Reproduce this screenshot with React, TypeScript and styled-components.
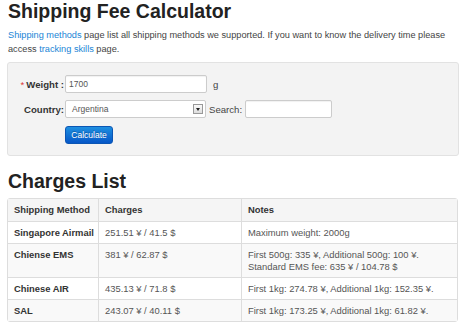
import React from 'react';
import styled, { createGlobalStyle } from 'styled-components';

const GlobalStyle = createGlobalStyle`
  body {
    margin: 0;
    background: #fff;
    font-family: "Liberation Sans", Arial, sans-serif;
    color: #333;
  }
`

const Page = styled.div`
  padding: 0 1px 0 7px;
  width: 460px;
  box-sizing: border-box;
`
const Title = styled.h1`
  margin: 0;
  padding: 0 0 0 1px;
  font-size: 19.5px;
  line-height: 22px;
  font-weight: bold;
  color: #222;
`
const Intro = styled.p`
  margin: 6px 0 0 1px;
  font-size: 9.2px;
  line-height: 14px;
  white-space: nowrap;
  color: #444;
`
const Link = styled.a`
  color: #1a85d6;
  text-decoration: none;
`
const FormPanel = styled.div`
  margin-top: 6px;
  height: 94px;
  box-sizing: border-box;
  background: #f3f3f3;
  border: 1px solid #e2e2e2;
  border-radius: 3px;
  padding: 12px 0 0 0;
  display: grid;
  grid-template-columns: 56px auto;
  align-content: start;
  row-gap: 7px;
  column-gap: 1px;
  align-items: center;
`
const Label = styled.label`
  text-align: right;
  font-size: 9.6px;
  font-weight: bold;
  color: #333;
`
const Required = styled.span`
  color: #d33;
  font-weight: normal;
  margin-right: 2px;
`
const Field = styled.div`
  display: flex;
  align-items: center;
  gap: 3px;
  font-size: 9.6px;
  color: #444;
`
const TextInput = styled.div<{ $w: number }>`
  width: ${p => p.$w}px;
  height: 18px;
  box-sizing: border-box;
  background: #fff;
  border: 1px solid #ccc;
  border-radius: 2px;
  font-size: 8.5px;
  line-height: 16px;
  padding: 0 3px;
  color: #555;
  box-shadow: inset 0 1px 1px rgba(0, 0, 0, 0.06);
`
const Unit = styled.span`
  margin-left: 3px;
  font-size: 9.6px;
`
const Select = styled.div`
  width: 141px;
  height: 18px;
  box-sizing: border-box;
  background: #fff;
  border: 1px solid #ccc;
  border-radius: 2px;
  display: flex;
  align-items: center;
  justify-content: space-between;
  padding: 0 2px 0 6px;
  font-size: 8.5px;
  color: #555;
`
const SelectArrow = styled.span`
  width: 10px;
  height: 10px;
  box-sizing: border-box;
  border: 1px solid #999;
  background: linear-gradient(#fafafa, #ddd);
  display: flex;
  align-items: center;
  justify-content: center;
  &::after {
    content: '';
    border-left: 2.5px solid transparent;
    border-right: 2.5px solid transparent;
    border-top: 3px solid #222;
  }
`
const Button = styled.button`
  grid-column: 2;
  justify-self: start;
  width: 48px;
  height: 18px;
  padding: 0;
  border: 1px solid #0b56b4;
  border-radius: 3px;
  background: linear-gradient(#1e8fe0, #0657c8);
  color: #fff;
  font-family: "Liberation Sans", Arial, sans-serif;
  font-size: 8.5px;
  text-shadow: 0 -1px 0 rgba(0, 0, 0, 0.25);
  margin-top: 1px;
`
const SubTitle = styled.h2`
  margin: 14px 0 0 1px;
  font-size: 19.5px;
  line-height: 22px;
  font-weight: bold;
  color: #222;
`
const Table = styled.table`
  margin-top: 6px;
  width: 451px;
  table-layout: fixed;
  border-collapse: separate;
  border-spacing: 0;
  border: 1px solid #ddd;
  border-radius: 3px;
  font-size: 9.4px;
  color: #555;
`
const Th = styled.th<{ $w?: number }>`
  text-align: left;
  font-weight: bold;
  color: #333;
  background: #f5f5f5;
  padding: 5px 6px;
  line-height: 12px;
  box-sizing: border-box;
  border-left: 1px solid #ddd;
  white-space: nowrap;
  width: ${p => (p.$w ? `${p.$w}px` : 'auto')};
  &:first-child { border-left: none; padding-right: 0; }
`
const Tr = styled.tr<{ $odd: boolean }>`
  background: ${p => (p.$odd ? '#f9f9f9' : '#fff')};
`
const Td = styled.td<{ $strong?: boolean }>`
  vertical-align: top;
  padding: 5px 6px 4px;
  line-height: 12px;
  white-space: nowrap;
  border-top: 1px solid #ddd;
  border-left: 1px solid #ddd;
  font-weight: ${p => (p.$strong ? 'bold' : 'normal')};
  color: ${p => (p.$strong ? '#333' : '#555')};
  &:first-child { border-left: none; padding-right: 0; }
`

const rows = [
  { method: 'Singapore Airmail', charges: '251.51 ¥ / 41.5 $', notes: ['Maximum weight: 2000g'] },
  { method: 'Chiense EMS', charges: '381 ¥ / 62.87 $', notes: ['First 500g: 335 ¥, Additional 500g: 100 ¥.', 'Standard EMS fee: 635 ¥ / 104.78 $'] },
  { method: 'Chinese AIR', charges: '435.13 ¥ / 71.8 $', notes: ['First 1kg: 274.78 ¥, Additional 1kg: 152.35 ¥.'] },
  { method: 'SAL', charges: '243.07 ¥ / 40.11 $', notes: ['First 1kg: 173.25 ¥, Additional 1kg: 61.82 ¥.'] },
]

export default function App() {
  return (
    <>
      <GlobalStyle />
      <Page>
        <Title>Shipping Fee Calculator</Title>
        <Intro>
          <Link href="#">Shipping methods</Link> page list all shipping methods we supported. If you want to know the delivery time please
          <br />
          access <Link href="#">tracking skills</Link> page.
        </Intro>
        <FormPanel>
          <Label><Required>*</Required>Weight :</Label>
          <Field>
            <TextInput $w={142}>1700</TextInput>
            <Unit>g</Unit>
          </Field>
          <Label>Country:</Label>
          <Field>
            <Select>
              Argentina
              <SelectArrow />
            </Select>
            <span>Search:</span>
            <TextInput $w={87} />
          </Field>
          <Button>Calculate</Button>
        </FormPanel>
        <SubTitle>Charges List</SubTitle>
        <Table>
          <thead>
            <tr>
              <Th $w={90}>Shipping Method</Th>
              <Th $w={143}>Charges</Th>
              <Th>Notes</Th>
            </tr>
          </thead>
          <tbody>
            {rows.map((r, i) => (
              <Tr key={r.method} $odd={i % 2 === 1}>
                <Td $strong>{r.method}</Td>
                <Td>{r.charges}</Td>
                <Td>
                  {r.notes.map(n => <div key={n}>{n}</div>)}
                </Td>
              </Tr>
            ))}
          </tbody>
        </Table>
      </Page>
    </>
  )
}
